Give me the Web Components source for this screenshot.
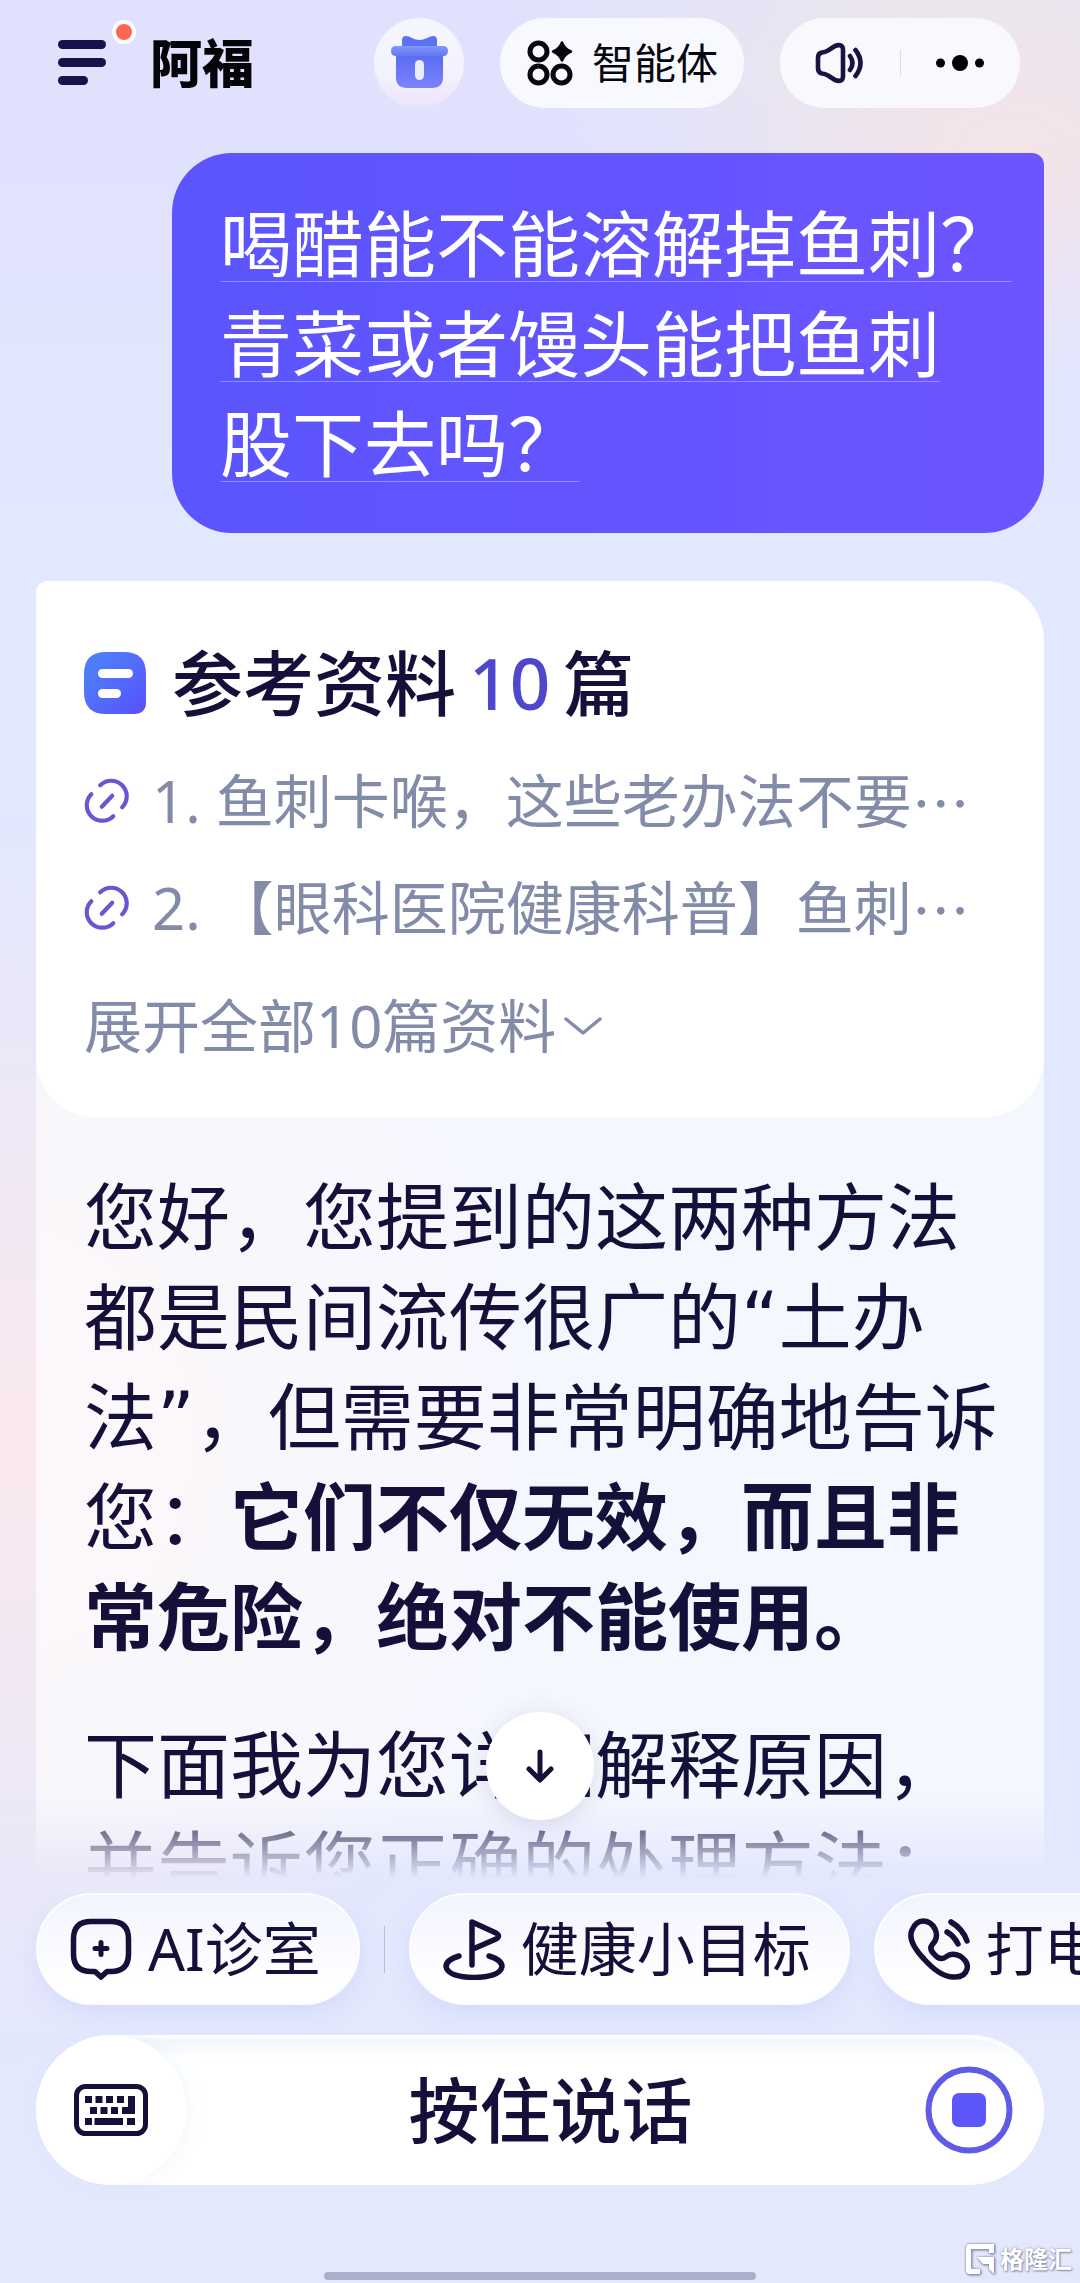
<!DOCTYPE html>
<html lang="zh-CN">
<head>
<meta charset="utf-8">
<meta name="viewport" content="width=device-width, initial-scale=1">
<title>阿福</title>
<style>
  html, body { margin: 0; }
  body {
    --ink: #15103a;
    --muted: #828ba8;
    color: var(--ink);
    font-family: "Noto Sans", "Noto Sans CJK SC", sans-serif;
  }
</style>
</head>
<body>
<chat-app></chat-app>

<template id="t-chat-app">
  <style>
    :host {
      display: flex; flex-direction: column; height: 100vh; overflow: hidden; position: relative;
      background:
        radial-gradient(ellipse 360px 220px at 94% 7%, rgba(250,228,226,.75), rgba(250,228,226,0)),
        radial-gradient(ellipse 460px 260px at 88% 0%, rgba(234,232,236,.9), rgba(234,232,236,0)),
        radial-gradient(ellipse 560px 620px at 0% 63%, rgba(253,232,236,.9), rgba(253,232,236,0)),
        linear-gradient(180deg, #e1e1fe 0%, #e1e2fe 8%, #e2e8fe 22%, #e3e8fd 100%);
    }
    main { flex: 1; min-height: 0; position: relative; }
    .feed {
      height: 100%; box-sizing: border-box; overflow: hidden; padding: 45px 36px 0;
      display: flex; flex-direction: column; gap: 48px;
      -webkit-mask-image: linear-gradient(180deg, #000 calc(100% - 84px), transparent 100%);
      mask-image: linear-gradient(180deg, #000 calc(100% - 84px), transparent 100%);
    }
    .feed > * { flex: none; }
    strong { font-weight: 700; }
    scroll-button { position: absolute; left: 50%; bottom: 58px; margin-left: -54px; }
  </style>
  <app-header></app-header>
  <main>
    <div class="feed">
      <user-bubble><span>喝醋能不能溶解掉鱼刺？</span><span>青菜或者馒头能把鱼刺</span><span>股下去吗？</span></user-bubble>
      <answer-card>
        <reference-list slot="refs" count="10">
          <reference-item index="1">鱼刺卡喉，这些老办法不要</reference-item>
          <reference-item index="2">【眼科医院健康科普】鱼刺</reference-item>
        </reference-list>
        <p>您好，您提到的这两种方法都是民间流传很广的“土办法”，但需要非常明确地告诉您：<strong>它们不仅无效，而且非常危险，绝对不能使用。</strong></p>
        <p>下面我为您详细解释原因，并告诉您正确的处理方法：</p>
      </answer-card>
    </div>
    <scroll-button></scroll-button>
  </main>
  <bottom-dock></bottom-dock>
  <water-mark></water-mark>
</template>

<template id="t-app-header">
  <style>
    :host { display: flex; align-items: center; justify-content: space-between; height: 90px; padding: 18px 60px 0 58px; }
    button { border: 0; margin: 0; padding: 0; background: none; font: inherit; color: inherit; display: flex; align-items: center; justify-content: center; }
    svg { display: block; flex: none; }
    .left, .right, .pill { display: flex; align-items: center; }
    .left { gap: 44px; }
    .right { gap: 36px; }
    .menu { position: relative; }
    .dot { position: absolute; right: -30px; top: -20px; box-sizing: border-box; width: 24px; height: 24px; border: 4px solid #fff; border-radius: 50%; background: #fc6752; }
    h1 { margin: 0; font-size: 52px; line-height: 56px; font-weight: 900; color: #050509; }
    .gift { width: 90px; height: 90px; border-radius: 50%; background: linear-gradient(180deg, #f5f7fe, #f3f3fe 60%, #ece3fc); }
    .agent { height: 90px; border-radius: 45px; padding: 0 26px 0 25px; gap: 19px; background: #f7f9fe; font-size: 42px; line-height: 60px; color: #060610; }
    .pill { width: 240px; height: 90px; border-radius: 45px; background: #f9f9fd; }
    .pill button { flex: 1; height: 90px; }
    .pill i { width: 1px; height: 26px; background: #dcdce6; }
  </style>
  <div class="left">
    <button class="menu" aria-label="菜单">
      <svg width="48" height="46" viewBox="0 0 48 46" fill="#19114a"><rect width="48" height="9" rx="4.500"/><rect y="18" width="48" height="9" rx="4.500"/><rect y="36" width="30" height="9" rx="4.500"/></svg>
      <span class="dot"></span>
    </button>
    <h1>阿福</h1>
  </div>
  <div class="right">
    <button class="gift" aria-label="礼物">
      <svg width="90" height="90" viewBox="0 0 90 90">
        <defs>
          <linearGradient id="g1" x1="0" y1="0" x2="0" y2="1"><stop offset="0" stop-color="#5a6cf2"/><stop offset="1" stop-color="#7c82fb"/></linearGradient>
          <linearGradient id="g2" x1="0" y1="0" x2="0" y2="1"><stop offset="0" stop-color="#7f98fb"/><stop offset="1" stop-color="#6476f4"/></linearGradient>
        </defs>
        <path d="M28 32V22q0-4 4-4 3 0 6 2 7 4 15 0 4-2 6-2 4 0 4 4v10z" fill="#5c72f2"/>
        <path d="M22 37h47v22q0 11-11 11H33q-11 0-11-11z" fill="url(#g1)"/>
        <path d="M22 28h47q5 0 5 5t-5 5H22q-5 0-5-5t5-5z" fill="url(#g2)"/>
        <rect x="41" y="42" width="9" height="20" rx="4.500" fill="#e9edff"/>
      </svg>
    </button>
    <button class="agent">
      <svg width="48" height="48" viewBox="0 0 48 48" fill="none" stroke="#060610" stroke-width="5"><circle cx="13.500" cy="12.500" r="8.500"/><circle cx="13.500" cy="35.500" r="8.500"/><circle cx="36.500" cy="35.500" r="8.500"/><path d="M37 3.500q2.500 6.500 9 9-6.500 2.500-9 9-2.500-6.500-9-9 6.500-2.500 9-9z" fill="#060610" stroke-width="2.500" stroke-linejoin="round"/></svg>
      <span>智能体</span>
    </button>
    <div class="pill">
      <button aria-label="声音">
        <svg width="52" height="46" viewBox="0 0 52 46" fill="none" stroke="#1a1240" stroke-width="4.600" stroke-linecap="round" stroke-linejoin="round"><path d="M4 18q0-5 4-5.500 3-.3 6-2L21 6q8-3 8 4v26q0 7-8 4l-7-4.500q-3-1.700-6-2-4-.5-4-5.500z"/><path d="M36 16q5 7 0 14M41.500 10q10 13 0 26"/></svg>
      </button>
      <i></i>
      <button aria-label="更多">
        <svg width="50" height="20" viewBox="0 0 50 20"><circle cx="5.500" cy="10" r="4.500"/><circle cx="25" cy="10" r="8"/><circle cx="44.500" cy="10" r="4.500"/></svg>
      </button>
    </div>
  </div>
</template>

<template id="t-user-bubble">
  <style>
    :host { display: flex; flex-direction: column; align-items: flex-start; align-self: flex-end; box-sizing: border-box; min-width: 872px; padding: 40px 48px; border-radius: 60px 12px 60px 60px; background: linear-gradient(90deg, #5b55fd, #6c55ff); color: #fff; font-size: 72px; line-height: 100px; }
    ::slotted(span) { white-space: nowrap; margin-right: -20px; text-decoration: underline 1px rgba(255,255,255,.32); text-underline-offset: 10px; text-decoration-skip-ink: none; }
  </style>
  <slot></slot>
</template>

<template id="t-answer-card">
  <style>
    :host { display: block; min-height: 1400px; border-radius: 12px 60px 0 0; background: rgba(255,255,255,.65); }
    .body { display: flex; flex-direction: column; gap: 48px; padding: 52px 36px 0 48px; font-family: "DejaVu Sans", "Noto Sans CJK SC", sans-serif; font-size: 73px; line-height: 100px; }
    ::slotted(p) { margin: 0; font-family: "DejaVu Sans", "Noto Sans CJK SC", sans-serif; }
  </style>
  <slot name="refs"></slot>
  <div class="body"><slot></slot></div>
</template>

<template id="t-reference-list">
  <style>
    :host { display: block; box-sizing: border-box; padding: 52px 50px 38px 48px; border-radius: 12px 60px 60px 60px; background: #fff; }
    header { display: flex; align-items: center; gap: 26px; height: 100px; margin-bottom: 14px; }
    svg { display: block; flex: none; }
    h2 { margin: 0; font-size: 71px; line-height: 100px; font-weight: 500; white-space: nowrap; display: flex; gap: 13px; }
    b { color: #4f48cf; font-weight: 500; }
    button { display: flex; align-items: center; gap: 8px; height: 106px; margin: 12px 0 0; padding: 0; border: 0; background: none; font: inherit; font-size: 58px; line-height: 80px; color: var(--muted); }
  </style>
  <header>
    <svg width="62" height="62" viewBox="0 0 62 62"><defs><linearGradient id="d" x1="0" y1="0" x2="1" y2="1"><stop offset=".2" stop-color="#4d7dfb"/><stop offset="1" stop-color="#5a50fb"/></linearGradient></defs><path d="M22 0h18q22 0 22 22v28q0 12-12 12H22Q0 62 0 40V22Q0 0 22 0z" fill="url(#d)"/><rect x="14" y="17" width="35" height="9" rx="4.500" fill="#fff"/><rect x="14" y="37" width="23" height="9" rx="4.500" fill="#fff"/></svg>
    <h2><span>参考资料</span><b></b><span>篇</span></h2>
  </header>
  <slot></slot>
  <button><span class="more"></span>
    <svg width="38" height="20" viewBox="0 0 38 20" fill="none" stroke="#828ba8" stroke-width="3.500" stroke-linecap="round" stroke-linejoin="round"><path d="M2 3l17 14L36 3"/></svg>
  </button>
</template>

<template id="t-reference-item">
  <style>
    :host { display: block; }
    a { display: flex; align-items: center; height: 107px; font-size: 58px; line-height: 80px; color: var(--muted); text-decoration: none; white-space: nowrap; }
    svg { flex: none; margin-right: 22px; }
    .n { margin-right: 15px; }
    .dots { font-family: "Noto Sans CJK SC", sans-serif; }
  </style>
  <a href="#">
    <svg width="46" height="46" viewBox="0 0 44 44" fill="none" stroke="#6558d2" stroke-width="4" stroke-linecap="round"><path d="M15.500 7A14 14 0 1 1 36.500 28"/><path d="M7 15.500A14 14 0 1 0 28 36.500"/><path d="M17 27.500l10-10.500"/></svg>
    <span class="n"></span><slot></slot><span class="dots">…</span>
  </a>
</template>

<template id="t-scroll-button">
  <style>
    :host { display: block; }
    button { display: flex; align-items: center; justify-content: center; width: 108px; height: 108px; padding: 0; border: 0; border-radius: 50%; background: #fff; box-shadow: 0 4px 24px rgba(60,50,110,.14); }
  </style>
  <button aria-label="回到底部"><svg width="30" height="34" viewBox="0 0 30 34" fill="none" stroke="#15103a" stroke-width="5" stroke-linecap="round" stroke-linejoin="round"><path d="M15 3v27M4 20l11 11 11-11"/></svg></button>
</template>

<template id="t-bottom-dock">
  <style>
    :host { display: flex; flex-direction: column; padding: 15px 0 3px; }
    .chips { display: flex; align-items: center; padding-left: 36px; overflow: hidden; padding-bottom: 30px; }
    .chips i { flex: none; width: 1px; height: 47px; margin: 0 24px; background: #b9bdd6; }
    .gap { margin-left: 24px; }
    .bar { display: flex; align-items: center; height: 150px; margin: 0 36px; border-radius: 75px; background: linear-gradient(180deg, #f0f3fe 0, #fff 24px); box-shadow: inset 0 4px 0 #fbfdff; }
    button { border: 0; padding: 0; background: none; font: inherit; color: inherit; display: flex; align-items: center; justify-content: center; }
    .kb { width: 150px; height: 150px; border-radius: 50%; background: #fff; box-shadow: 6px 0 16px rgba(200,225,245,.2); }
    .talk { flex: 1; height: 150px; font-size: 71px; line-height: 100px; font-weight: 500; padding-right: 10px; }
    .stop { margin-right: 31px; }
    .home { align-self: center; width: 40%; height: 8px; margin-top: 87px; border-radius: 4px; background: #aab0c9; }
  </style>
  <div class="chips">
    <action-chip label="AI诊室"><svg width="62" height="62" viewBox="0 0 62 62" fill="none" stroke="#15103a" stroke-width="5.500" stroke-linecap="round" stroke-linejoin="round"><path d="M21 3.500h20Q58.500 3.500 58.500 21v15Q58.500 53.500 41 53.500h-4L31 59l-6-5.500h-4Q3.500 53.500 3.500 36V21Q3.500 3.500 21 3.500z"/><path d="M31 24.500v12M25 30.500h12" stroke-width="5"/></svg></action-chip>
    <i></i>
    <action-chip label="健康小目标"><svg width="62" height="62" viewBox="0 0 62 62" fill="none" stroke="#15103a" stroke-width="5.500" stroke-linecap="round" stroke-linejoin="round"><path d="M29 47V4l24 11q5 3 0 6L30 31"/><path d="M16 38Q3 42 3 48.500 5 59 31 59.500q26-.5 28-11Q59 42 46 38"/></svg></action-chip>
    <action-chip class="gap" label="打电话"><svg width="62" height="62" viewBox="0 0 62 62" fill="none" stroke="#15103a" stroke-width="5.500" stroke-linecap="round" stroke-linejoin="round"><path d="M4 12Q8 3 15 3q8 0 12 8 3 6 0 12l-3 4q-3 4 2 9 5 6 10 4l5-3q5-2 11 1 9 6 7 13-2 8-12 8-14 1-31-18Q-1 23 4 12z"/><path d="M39 14q7 4 11 12M43 4q12 7 16 19"/></svg></action-chip>
  </div>
  <div class="bar">
    <button class="kb" aria-label="键盘"><svg width="74" height="52" viewBox="0 0 74 52"><rect x="2.500" y="2.500" width="69" height="47" rx="9" fill="none" stroke="#15103a" stroke-width="5"/><path fill="#15103a" d="M11 12h7v7h-7zM21.500 12h7v7h-7zM32 12h7v7h-7zM43 12h7v7h-7zM54 12h7v18H48v-7h6zM16 23h7v7h-7zM26.500 23h7v7h-7zM37 23h7v7h-7zM11 34h7v7h-7zM20.500 34H49v7H20.500zM53 34h8v7h-8z"/></svg></button>
    <button class="talk">按住说话</button>
    <button class="stop" aria-label="停止"><svg width="88" height="88" viewBox="0 0 88 88"><circle cx="44" cy="44" r="40.500" fill="none" stroke="#5f5be6" stroke-width="6"/><rect x="27" y="27" width="34" height="34" rx="7" fill="#5c56fb"/></svg></button>
  </div>
  <div class="home"></div>
</template>

<template id="t-action-chip">
  <style>
    :host { display: block; flex: none; }
    button { display: flex; align-items: center; gap: 16px; height: 112px; box-sizing: border-box; padding: 0 37px 0 32px; border: 2px solid #fbfdff; border-radius: 56px; background: linear-gradient(180deg, #f2f4fe, #fff 80%); box-shadow: 0 8px 20px rgba(170,175,250,.22); font: inherit; font-size: 58px; line-height: 80px; color: var(--ink); white-space: nowrap; }
  </style>
  <button><slot></slot><span></span></button>
</template>

<template id="t-water-mark">
  <style>
    :host { position: absolute; right: 8px; bottom: 8px; display: flex; align-items: center; gap: 6px; color: #fff; font-size: 24px; line-height: 32px; font-weight: 700; text-shadow: 1px 1px 2px #8287a8, 0 0 2px #8287a8; }
    svg { filter: drop-shadow(0 0 1px #8287a8) drop-shadow(1px 1px 1px #8287a8); }
  </style>
  <svg width="28" height="30" viewBox="0 0 28 30"><path d="M4 0h24v9h-5V5H6q-1 0-1 1v17q0 2 2 2h7v5H4q-4 0-4-4V4q0-4 4-4zM11 13h17v17l-5-5v-5h-6z" fill="#fff"/></svg>
  <span>格隆汇</span>
</template>

<script>
  function define(name, setup) {
    customElements.define(name, class extends HTMLElement {
      constructor() {
        super();
        this.attachShadow({ mode: 'open' })
          .append(document.getElementById('t-' + name).content.cloneNode(true));
      }
      connectedCallback() {
        if (setup) setup(this, this.shadowRoot);
      }
    });
  }

  define('app-header');
  define('user-bubble');
  define('answer-card');
  define('reference-list', (el, root) => {
    const count = el.getAttribute('count');
    root.querySelector('b').textContent = count;
    root.querySelector('.more').textContent = '展开全部' + count + '篇资料';
  });
  define('reference-item', (el, root) => {
    root.querySelector('.n').textContent = el.getAttribute('index') + '.';
  });
  define('scroll-button');
  define('action-chip', (el, root) => {
    root.querySelector('span').textContent = el.getAttribute('label');
  });
  define('bottom-dock');
  define('water-mark');
  define('chat-app');
</script>
</body>
</html>
